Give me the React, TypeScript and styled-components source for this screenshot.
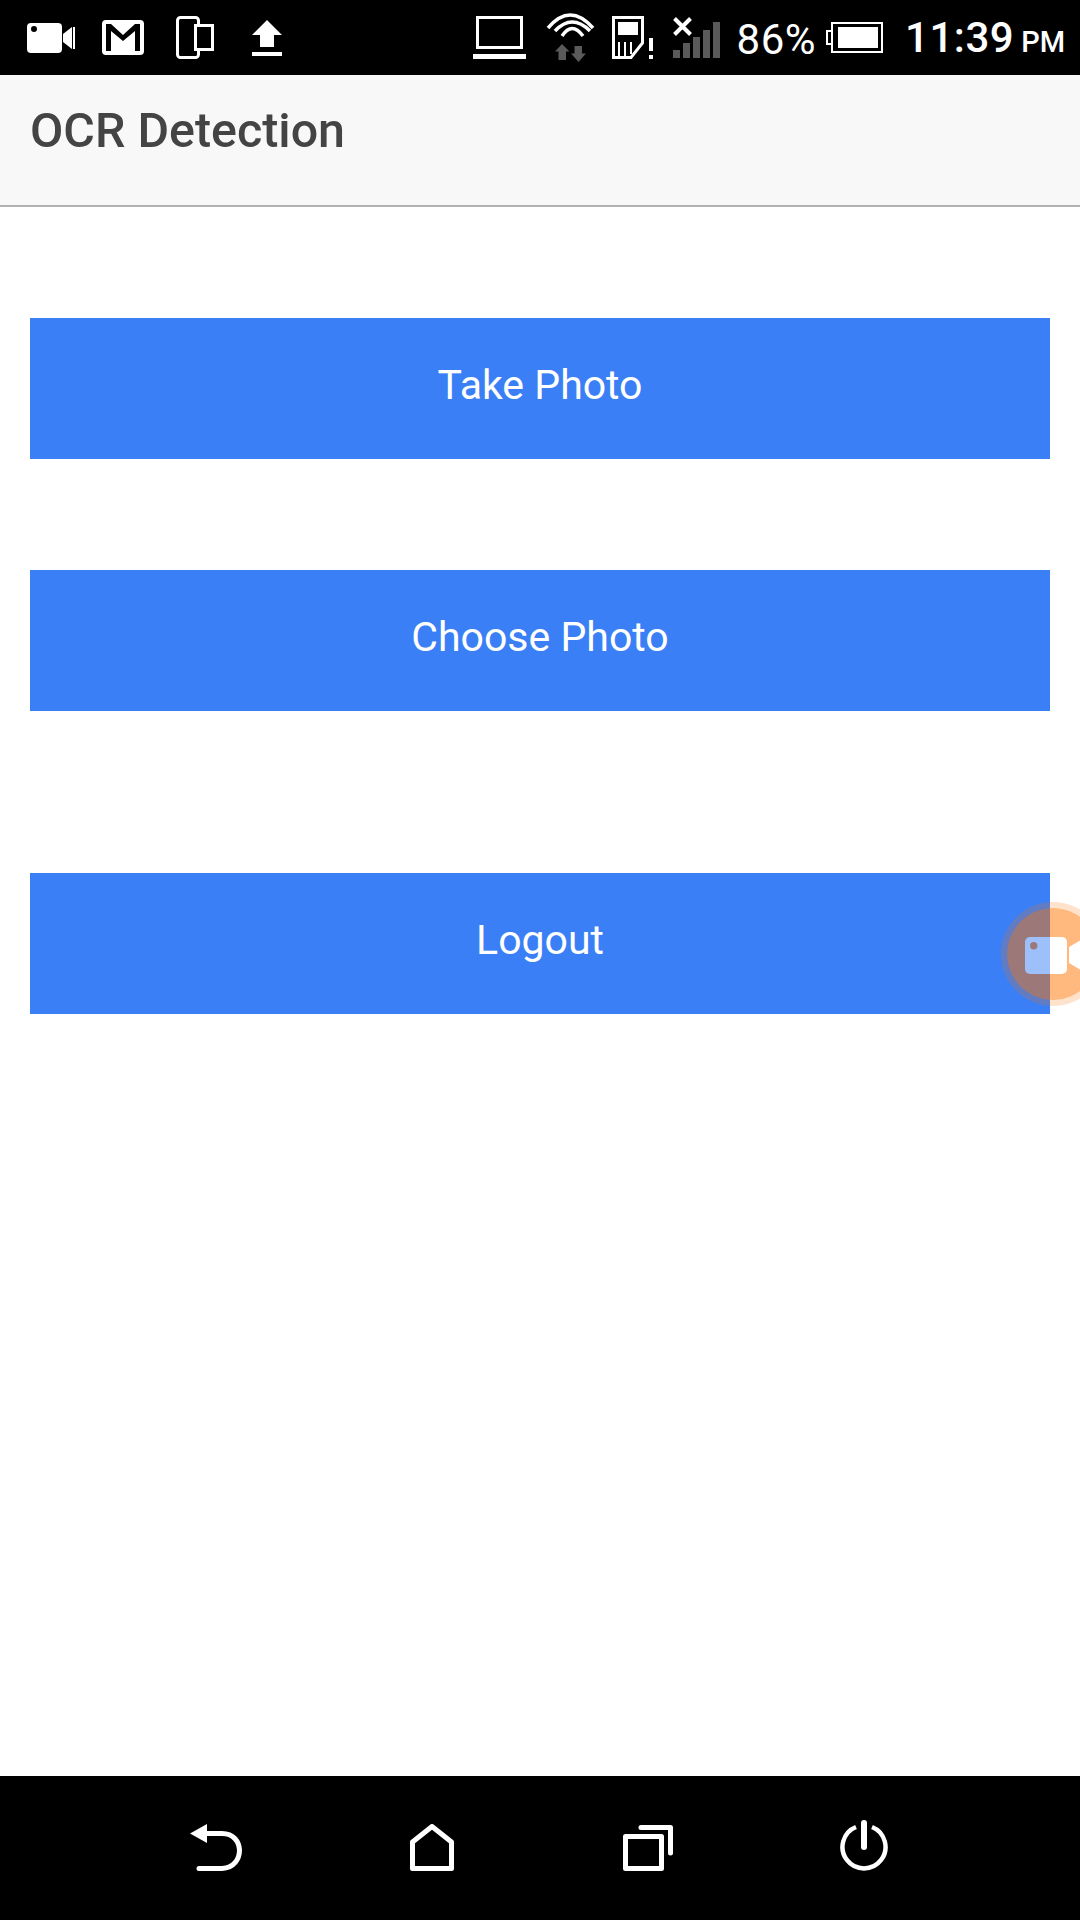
import React from 'react';
import styled, { createGlobalStyle } from 'styled-components';

const GlobalStyle = createGlobalStyle`
  html, body {
    margin: 0;
    padding: 0;
    background: #fff;
    font-family: Roboto, "Liberation Sans", sans-serif;
  }
`;

const Screen = styled.div`
  position: relative;
  width: 1080px;
  height: 1920px;
  display: flex;
  flex-direction: column;
  overflow: hidden;
  background: #fff;
`;

const StatusBar = styled.div`
  height: 75px;
  flex: none;
  box-sizing: border-box;
  display: flex;
  align-items: center;
  justify-content: space-between;
  padding: 0 15px 0 27px;
  background: #000;
  color: #fff;
`;

const StatusGroup = styled.div`
  display: flex;
  align-items: center;
`;

const StatusIcon = styled.svg<{ $left?: number }>`
  display: block;
  flex: none;
  margin-left: ${p => p.$left ?? 0}px;
`;

const Percent = styled.span`
  margin: 4px 0 0 17px;
  font-size: 42px;
  line-height: 60px;
  letter-spacing: 0.5px;
`;

const ClockGroup = styled.div`
  display: flex;
  align-items: baseline;
  margin: 4px 0 0 22px;
  line-height: 60px;
`;

const Clock = styled.span`
  font-size: 42px;
  font-weight: 500;
  letter-spacing: 0.5px;
`;

const Meridiem = styled.span`
  margin-left: 7px;
  font-size: 29px;
  font-weight: 500;
`;

const AppBar = styled.header`
  height: 132px;
  flex: none;
  box-sizing: border-box;
  display: flex;
  align-items: center;
  padding: 0 30px 18px;
  background: #f8f8f8;
  border-bottom: 2px solid #b2b2b2;
`;

const Title = styled.h1`
  margin: 0;
  font-size: 48.4px;
  font-weight: 500;
  line-height: 1;
  color: #444;
`;

const Content = styled.main`
  flex: 1;
  display: flex;
  flex-direction: column;
  padding: 111px 30px 0;
`;

const ActionButton = styled.button<{ $top?: number }>`
  height: 141px;
  flex: none;
  margin: ${p => p.$top ?? 0}px 0 0;
  padding: 0 0 8px;
  border: 0;
  border-radius: 0;
  background: #3a7ff5;
  color: #fff;
  font-family: Roboto, "Liberation Sans", sans-serif;
  font-size: 41px;
  text-align: center;
`;

const RecorderBubble = styled.div`
  position: absolute;
  left: 1001px;
  top: 902px;
  width: 104px;
  height: 104px;
  border-radius: 50%;
  box-sizing: border-box;
  border: 6px solid rgba(255, 115, 0, 0.4);
  background: #ff7300;
  background-clip: padding-box;
  opacity: 0.5;
`;

const BubbleIcon = styled.svg`
  position: absolute;
  left: 18px;
  top: 29px;
`;

const NavBar = styled.nav`
  height: 144px;
  flex: none;
  box-sizing: border-box;
  display: flex;
  align-items: flex-end;
  padding: 0 0 49px 190px;
  background: #000;
`;

const NavIcon = styled.svg<{ $left?: number }>`
  display: block;
  flex: none;
  margin-left: ${p => p.$left ?? 0}px;
`;

export default function App() {
  return (
    <Screen>
      <GlobalStyle />
      <StatusBar>
        <StatusGroup>
          <StatusIcon width="48" height="30" viewBox="0 0 48 30">
            <rect x="0" y="0" width="35" height="30" rx="4" fill="#fff" />
            <circle cx="7" cy="6" r="3" fill="#000" />
            <path d="M36 11 L45 4 V26 L36 19 Z" fill="#fff" />
            <rect x="46" y="4" width="2" height="22" fill="#fff" />
          </StatusIcon>
          <StatusIcon $left={27} width="42" height="35" viewBox="0 0 42 35">
            <rect x="0" y="0" width="42" height="35" rx="4" fill="#fff" />
            <path d="M4 4 H9 L21 15 L33 4 H38 V31 H33 V11 L21 21 L9 11 V31 H4 Z" fill="#000" />
          </StatusIcon>
          <StatusIcon $left={32} width="38" height="43" viewBox="0 0 38 43">
            <rect x="1.5" y="1.5" width="21" height="40" rx="3" fill="none" stroke="#fff" strokeWidth="3" />
            <rect x="18" y="8" width="20" height="27" fill="#000" />
            <rect x="19.5" y="9.5" width="17" height="24" fill="none" stroke="#fff" strokeWidth="3" />
          </StatusIcon>
          <StatusIcon $left={38} width="30" height="36" viewBox="0 0 30 36">
            <path d="M15 0 L30 15 H22 V27 H8 V15 H0 Z" fill="#fff" />
            <rect x="0" y="32" width="30" height="4" fill="#fff" />
          </StatusIcon>
        </StatusGroup>
        <StatusGroup>
          <StatusIcon width="53" height="43" viewBox="0 0 53 43">
            <rect x="4.5" y="1.5" width="44" height="30" fill="none" stroke="#fff" strokeWidth="3" />
            <rect x="0" y="38" width="53" height="5" fill="#fff" />
          </StatusIcon>
          <StatusIcon $left={19} width="51" height="49" viewBox="0 0 51 49">
            <path d="M3 15 Q25 -11 48 15" fill="none" stroke="#fff" strokeWidth="3.5" />
            <path d="M10 18 Q27 0 45 18" fill="none" stroke="#fff" strokeWidth="3.5" />
            <path d="M17 23 Q27 8 38 23" fill="none" stroke="#fff" strokeWidth="3.5" />
            <path d="M17 31 L24.5 38.5 H21 V47 H13.5 V38.5 H10 Z" fill="#5a5a5a" />
            <path d="M29.5 33 H37 V40.5 H41 L33.5 49 L26 40.5 H29.5 Z" fill="#5a5a5a" />
          </StatusIcon>
          <StatusIcon $left={16} width="41" height="43" viewBox="0 0 41 43">
            <path d="M1.5 1.5 H30.5 V27 L19 41.5 H1.5 Z" fill="none" stroke="#fff" strokeWidth="3" />
            <rect x="6" y="6" width="20" height="13" fill="#fff" />
            <path d="M7 26 V40 M13 26 V40 M19 26 V38" stroke="#fff" strokeWidth="2" />
            <rect x="37" y="22" width="4" height="13" fill="#fff" />
            <rect x="37" y="39" width="4" height="4" fill="#fff" />
          </StatusIcon>
          <StatusIcon $left={20} width="47" height="41" viewBox="0 0 47 41">
            <path d="M1.5 1.5 L17.5 17.5 M17.5 1.5 L1.5 17.5" stroke="#fff" strokeWidth="4" />
            <rect x="0" y="33" width="7" height="8" fill="#5a5a5a" />
            <rect x="10" y="26" width="7" height="15" fill="#5a5a5a" />
            <rect x="20" y="20" width="7" height="21" fill="#5a5a5a" />
            <rect x="30" y="13" width="7" height="28" fill="#5a5a5a" />
            <rect x="40" y="5" width="7" height="36" fill="#5a5a5a" />
          </StatusIcon>
          <Percent>86%</Percent>
          <StatusIcon $left={10} width="57" height="31" viewBox="0 0 57 31">
            <path d="M5 9 H1 V22 H5" fill="none" stroke="#fff" strokeWidth="2" />
            <rect x="6" y="1" width="50" height="29" fill="none" stroke="#fff" strokeWidth="2" />
            <rect x="12" y="5" width="40" height="21" fill="#fff" />
          </StatusIcon>
          <ClockGroup>
            <Clock>11:39</Clock>
            <Meridiem>PM</Meridiem>
          </ClockGroup>
        </StatusGroup>
      </StatusBar>
      <AppBar>
        <Title>OCR Detection</Title>
      </AppBar>
      <Content>
        <ActionButton>Take Photo</ActionButton>
        <ActionButton $top={111}>Choose Photo</ActionButton>
        <ActionButton $top={162}>Logout</ActionButton>
      </Content>
      <RecorderBubble>
        <BubbleIcon width="73" height="37" viewBox="0 0 73 37">
          <rect x="0" y="0" width="42" height="37" rx="5" fill="#fff" />
          <circle cx="8.7" cy="8.7" r="3.7" fill="#ff7300" />
          <path d="M44 10 L56 3 V33 L44 26 Z" fill="#fff" />
        </BubbleIcon>
      </RecorderBubble>
      <NavBar>
        <NavIcon width="52" height="47" viewBox="0 0 52 47">
          <path d="M0 9.5 L17 0 V19 Z" fill="#fff" />
          <path d="M15 9.5 H32 C44 9.5 49 18 49.5 26 C49.5 35 44 44 32 44.5 H9" fill="none" stroke="#fff" strokeWidth="5" strokeLinecap="round" />
        </NavIcon>
        <NavIcon $left={168} width="44" height="47" viewBox="0 0 44 47">
          <path d="M2.5 18 L22 2.5 L41.5 18 V44.5 H2.5 Z" fill="none" stroke="#fff" strokeWidth="5" strokeLinejoin="round" />
        </NavIcon>
        <NavIcon $left={169} width="50" height="46" viewBox="0 0 50 46">
          <rect x="2.5" y="11.5" width="36" height="32" fill="none" stroke="#fff" strokeWidth="5" strokeLinejoin="round" />
          <path d="M18 2.5 H47.5 V28" fill="none" stroke="#fff" strokeWidth="5" strokeLinecap="round" strokeLinejoin="round" />
        </NavIcon>
        <NavIcon $left={167} width="48" height="51" viewBox="0 0 48 51">
          <path d="M16 7 A21.5 21.5 0 1 0 32 7" fill="none" stroke="#fff" strokeWidth="4.5" />
          <path d="M24 3 V27" fill="none" stroke="#fff" strokeWidth="6" strokeLinecap="round" />
        </NavIcon>
      </NavBar>
    </Screen>
  );
}
